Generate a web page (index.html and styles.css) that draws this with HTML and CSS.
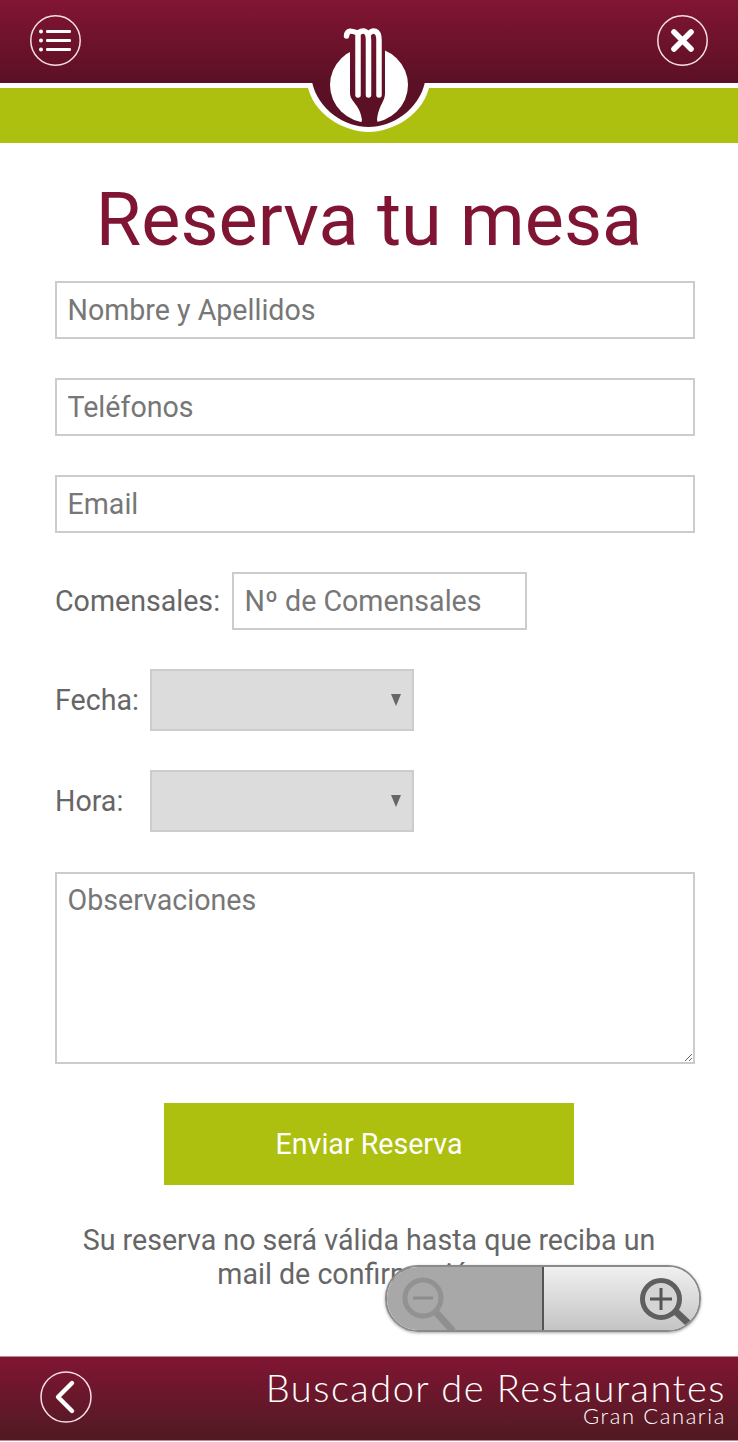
FILE: index.html
```html
<!DOCTYPE html>
<html lang="es">
<head>
  <meta charset="UTF-8">
  <title>Reserva tu mesa</title>
  <link rel="stylesheet" href="styles.css">
</head>
<body>
  <header class="top">
    <div class="top-bar">
      <a class="round-btn" href="#">
        <svg width="51" height="51" viewBox="0 0 51 51">
          <circle cx="25.5" cy="25.5" r="24.7" fill="none" stroke="#f6dfe3" stroke-width="1.5"/>
          <g fill="#fff">
            <circle cx="11" cy="16.5" r="2"/>
            <circle cx="11" cy="25.5" r="2"/>
            <circle cx="11" cy="34.5" r="2"/>
            <rect x="16" y="15" width="25" height="3" rx="1.2"/>
            <rect x="16" y="24" width="25" height="3" rx="1.2"/>
            <rect x="16" y="33" width="25" height="3" rx="1.2"/>
          </g>
        </svg>
      </a>
      <a class="round-btn" href="#">
        <svg width="51" height="51" viewBox="0 0 51 51">
          <circle cx="25.5" cy="25.5" r="24.7" fill="none" stroke="#f6dfe3" stroke-width="1.5"/>
          <path d="M17 17 L34 34 M34 17 L17 34" stroke="#fff" stroke-width="5.6" stroke-linecap="round"/>
        </svg>
      </a>
    </div>
    <div class="top-strip"></div>
    <svg class="logo" width="140" height="120" viewBox="0 0 140 120">
      <defs>
        <linearGradient id="forkFill" x1="0" y1="0" x2="0" y2="1">
          <stop offset="0" stop-color="#6d132c"/>
          <stop offset="0.75" stop-color="#5b1025"/>
          <stop offset="1" stop-color="#5b1025"/>
        </linearGradient>
      </defs>
      <path d="M7 63 C12 95 45 112 68.5 112 C92 112 125 95 130 63 Z" fill="#fff"/>
      <path d="M12 62 C18 90 45 107 68.5 107 C92 107 119 90 125 62 Z" fill="#5b1025"/>
      <ellipse cx="69" cy="65" rx="39" ry="38" fill="#fff"/>
      <path d="M50 22 V73 C50 82 60 84 62 100 L60 106 H79 L77 100 C79 84 85 82 85 73 V22 Z" fill="url(#forkFill)"/>
      <g fill="none" stroke="#fff" stroke-width="5.5" stroke-linecap="round">
        <path d="M46.5 16 C47 9 52 11 58 13 V75"/>
        <path d="M58 13 C64 9 68.5 11 68.5 20 V75"/>
        <path d="M68.5 14 C73 9 79 10 79 20 V75"/>
      </g>
    </svg>
  </header>

  <main class="content">
    <h1 class="title">Reserva tu mesa</h1>
    <form class="form">
      <input class="field" type="text" placeholder="Nombre y Apellidos">
      <input class="field" type="text" placeholder="Teléfonos">
      <input class="field" type="text" placeholder="Email">
      <div class="row">
        <label class="row-label row-label-auto">Comensales:</label>
        <input class="field field-short" type="text" placeholder="Nº de Comensales">
      </div>
      <div class="row">
        <label class="row-label">Fecha:</label>
        <div class="fake-select"></div>
      </div>
      <div class="row">
        <label class="row-label">Hora:</label>
        <div class="fake-select"></div>
      </div>
      <textarea class="field field-area" placeholder="Observaciones"></textarea>
      <button class="send" type="button">Enviar Reserva</button>
    </form>
    <p class="note">Su reserva no será válida hasta que reciba un mail de <span class="note-end">confirmación</span></p>
  </main>

  <div class="zoom-ctl">
    <div class="zoom-half zoom-out">
      <svg width="70" height="63" viewBox="0 0 70 63">
        <path d="M46 42 L66 64" stroke="#8f8f8f" stroke-width="7"/>
        <circle cx="36" cy="31" r="18" fill="#a8a8a8" stroke="#929292" stroke-width="5"/>
        <rect x="26" y="29.5" width="20" height="3" fill="#8c8c8c"/>
      </svg>
    </div>
    <div class="zoom-half zoom-in">
      <svg width="70" height="63" viewBox="0 0 70 63">
        <path d="M44 42 L60 57" stroke="#5f5f5f" stroke-width="7"/>
        <circle cx="32" cy="32" r="18.5" fill="#d4d4d4" stroke="#5f5f5f" stroke-width="5"/>
        <path d="M21 32 H43 M32 21 V43" stroke="#555" stroke-width="3"/>
      </svg>
    </div>
  </div>

  <footer class="bottom">
    <a class="round-btn back" href="#">
      <svg width="52" height="52" viewBox="0 0 52 52">
        <circle cx="26" cy="26" r="25" fill="none" stroke="#f6dfe3" stroke-width="1.5"/>
        <path d="M32 12 L18 26 L32 40" fill="none" stroke="#fff" stroke-width="4.4" stroke-linecap="round" stroke-linejoin="round"/>
      </svg>
    </a>
    <div class="brand">
      <div class="brand-name">Buscador de Restaurantes</div>
      <div class="brand-sub">Gran Canaria</div>
    </div>
  </footer>
</body>
</html>
```

FILE: styles.css
```css
html, body {
  margin: 0;
  padding: 0;
}
body {
  position: relative;
  width: 738px;
  height: 1442px;
  overflow: hidden;
  background: #fff;
  font-family: Roboto, sans-serif;
  color: #666;
}

/* header */
.top {
  position: relative;
}
.top-bar {
  height: 83px;
  padding: 15px 30px 0;
  box-sizing: border-box;
  display: flex;
  justify-content: space-between;
  background: linear-gradient(#811532, #5b1025);
}
.round-btn {
  display: block;
  line-height: 0;
}
.top-strip {
  height: 55px;
  margin-top: 5px;
  background: #adc00f;
}
.logo {
  position: absolute;
  left: 300px;
  top: 20px;
}

/* form */
.title {
  margin: 0;
  padding-top: 37px;
  height: 138px;
  box-sizing: border-box;
  text-align: center;
  font-size: 73.8px;
  font-weight: 400;
  line-height: 80px;
  color: #7f1433;
}
.form {
  margin-left: 55px;
  width: 640px;
  display: flex;
  flex-direction: column;
  gap: 39px;
}
.field {
  display: block;
  width: 100%;
  height: 58px;
  margin: 0;
  padding: 0 10.5px 1px;
  box-sizing: border-box;
  border: 2px solid #ccc;
  border-radius: 0;
  outline: 0;
  font: 28.6px Roboto, sans-serif;
  color: #666;
}
.field::placeholder {
  color: #777;
  opacity: 1;
}
.row {
  display: flex;
  align-items: center;
}
.row-label {
  width: 95px;
  font-size: 28.6px;
  color: #666;
}
.row-label-auto {
  width: 177px;
}
.field-short {
  width: 295px;
}
.fake-select {
  position: relative;
  width: 264px;
  height: 62px;
  box-sizing: border-box;
  border: 2px solid #ccc;
  background: #dcdcdc;
}
.fake-select::after {
  content: "";
  position: absolute;
  right: 11px;
  top: 23px;
  border-left: 5.5px solid transparent;
  border-right: 5.5px solid transparent;
  border-top: 12px solid #666;
}
.field-area {
  height: 192px;
  margin-top: 1px;
  padding-top: 9px;
  line-height: 34px;
  resize: both;
}
.send {
  align-self: flex-start;
  width: 410px;
  height: 82px;
  margin-left: 109px;
  border: 0;
  background: #adc00f;
  color: #fff;
  font: 28.6px Roboto, sans-serif;
}
.note {
  width: 600px;
  margin: 38px 0 0 69px;
  text-align: center;
  font-size: 28.6px;
  line-height: 34px;
  color: #666;
}
.note-end {
  padding-right: 36px;
}

/* zoom control */
.zoom-ctl {
  position: absolute;
  left: 385px;
  top: 1265px;
  width: 316px;
  height: 67px;
  display: flex;
  box-sizing: border-box;
  border: 2px solid #8a8a8a;
  border-radius: 33px;
  overflow: hidden;
  box-shadow: 0 1px 3px rgba(0, 0, 0, .35);
}
.zoom-half {
  height: 100%;
}
.zoom-out {
  width: 155px;
  background: #a8a8a8;
  border-right: 2px solid #555;
  line-height: 0;
}
.zoom-in {
  flex: 1;
  display: flex;
  justify-content: flex-end;
  background: linear-gradient(#f0f0f0, #c4c4c4);
  line-height: 0;
}

/* footer */
.bottom {
  position: absolute;
  left: 0;
  top: 1356px;
  width: 738px;
  height: 85px;
  box-sizing: border-box;
  padding: 14px 12px 0 40px;
  display: flex;
  justify-content: space-between;
  border-top: 1px solid #b98a96;
  border-bottom: 1px solid #b98a96;
  background: linear-gradient(#811532, #4f1a22);
  color: #fff;
}
.brand {
  text-align: right;
  font-family: Lato, sans-serif;
  font-weight: 300;
  margin-top: -2px;
}
.brand-name {
  font-size: 38px;
  line-height: 36px;
  letter-spacing: 1.5px;
}
.brand-sub {
  font-size: 22px;
  line-height: 22px;
  letter-spacing: 1.6px;
}
```
